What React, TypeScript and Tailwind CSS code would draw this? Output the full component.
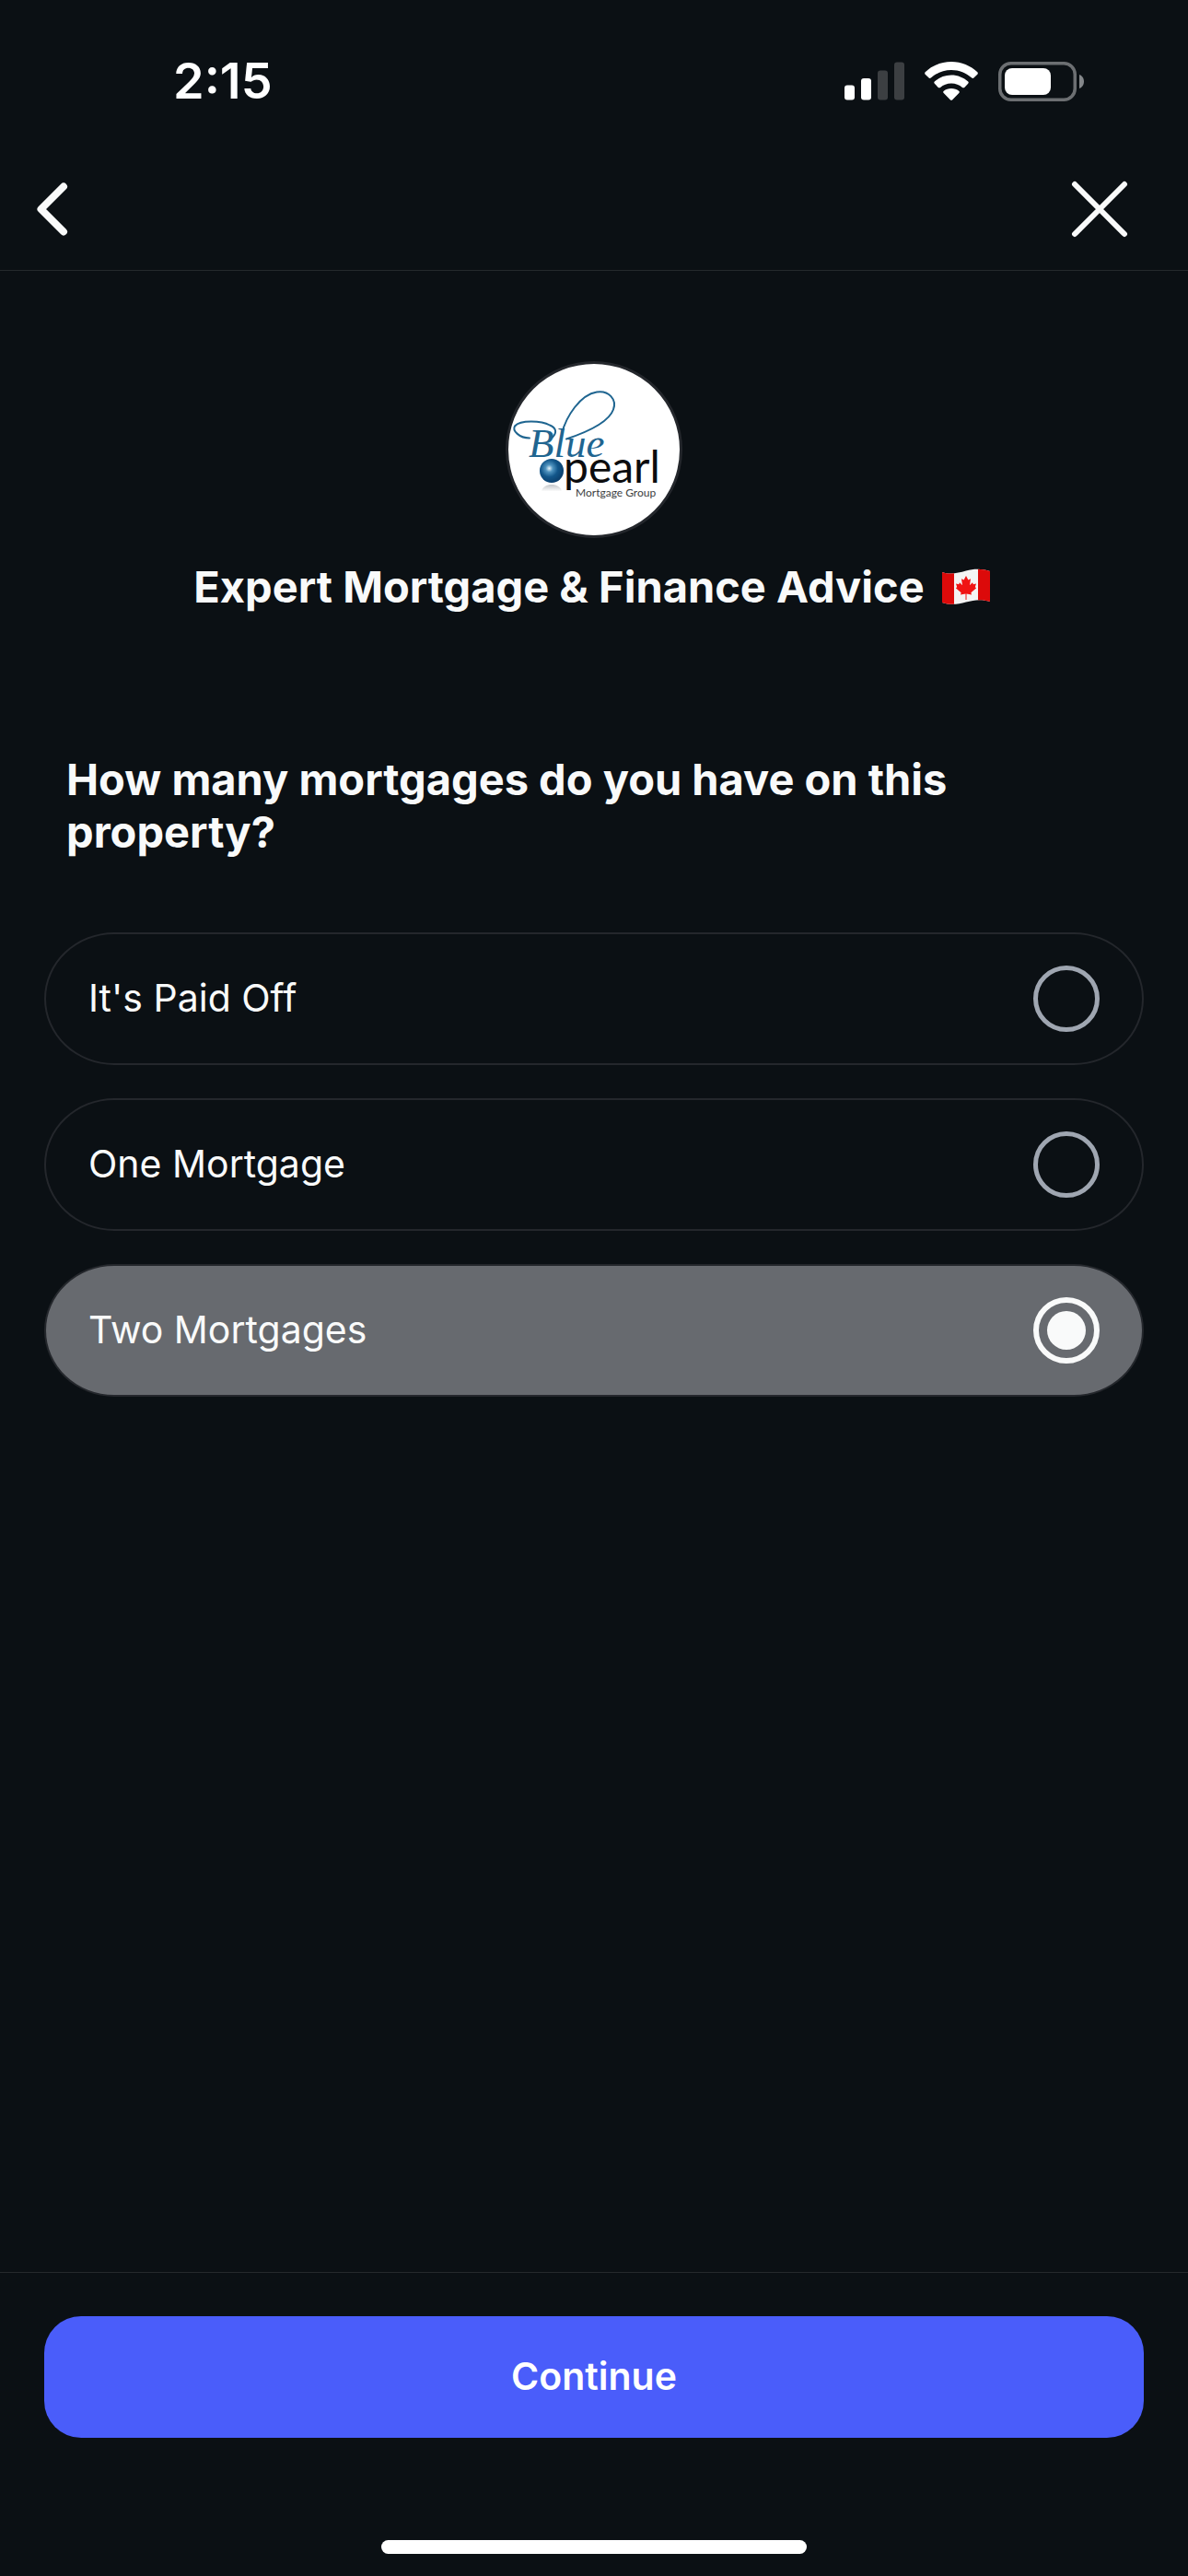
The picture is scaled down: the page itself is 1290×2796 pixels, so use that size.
import { useState } from "react";

const OPTIONS = ["It's Paid Off", "One Mortgage", "Two Mortgages"];

function SignalIcon() {
  return (
    <svg width="65" height="42" viewBox="0 0 65 42" aria-hidden="true">
      <rect x="0" y="25.500" width="11" height="16" rx="3" fill="#fff" />
      <rect x="18" y="18" width="11" height="23.500" rx="3" fill="#fff" />
      <rect x="36" y="9.500" width="11" height="32" rx="3" fill="#3c3f42" />
      <rect x="54" y="0.500" width="11" height="41" rx="3" fill="#3c3f42" />
    </svg>
  );
}

function WifiIcon() {
  return (
    <svg width="58" height="42" viewBox="0 0 58 42" fill="#fff" aria-hidden="true">
      <path d="M29 0C40 0 50 4.300 57.300 11.300C58 12 58 13 57.300 13.700L53.400 17.600C52.800 18.200 51.900 18.200 51.200 17.600C45.200 12.200 37.500 9 29 9S12.800 12.200 6.800 17.600C6.100 18.200 5.200 18.200 4.600 17.600L0.700 13.700C0 13 0 12 0.700 11.300C8 4.300 18 0 29 0Z" />
      <path d="M29 14.500C36 14.500 42.300 17.200 47.200 21.500C47.900 22.100 47.900 23.100 47.200 23.800L43.200 27.900C42.600 28.500 41.700 28.500 41 28C37.700 25.100 33.600 23.500 29 23.500S20.300 25.100 17 28C16.300 28.500 15.400 28.500 14.800 27.900L10.800 23.800C10.100 23.100 10.100 22.100 10.800 21.500C15.700 17.200 22 14.500 29 14.500Z" />
      <path d="M29 29C32.200 29 35 30 37.200 31.800C38 32.400 38 33.400 37.300 34L30 41.400C29.400 42 28.600 42 28 41.400L20.700 34C20 33.400 20 32.400 20.800 31.800C23 30 25.800 29 29 29Z" />
    </svg>
  );
}

function BatteryIcon() {
  return (
    <svg width="94" height="43" viewBox="0 0 94 43" aria-hidden="true">
      <rect x="1.750" y="1.750" width="81.500" height="39.500" rx="12" fill="none" stroke="#6c6f72" strokeWidth="3.500" />
      <rect x="7" y="7" width="50" height="29" rx="8" fill="#fff" />
      <path d="M88 14C91 15 93 18 93 21.500S91 28 88 29Z" fill="#84878a" />
    </svg>
  );
}

function BrandLogo() {
  return (
    <svg width="186" height="186" viewBox="12 9.500 186 186" role="img" aria-label="Blue Pearl Mortgage Group">
      <defs>
        <radialGradient id="pearl" cx="0.4" cy="0.4" r="0.6">
          <stop offset="0" stopColor="#e6f4fb" />
          <stop offset="0.25" stopColor="#4f93bf" />
          <stop offset="0.6" stopColor="#12568a" />
          <stop offset="1" stopColor="#0c416f" />
        </radialGradient>
        <linearGradient id="pearl-shadow" x1="0" y1="0" x2="0" y2="1">
          <stop offset="0" stopColor="#c4c7ca" />
          <stop offset="1" stopColor="#ffffff" />
        </linearGradient>
      </defs>
      <g fill="none" stroke="#1f6590" strokeLinecap="round">
        <path strokeWidth="2" d="M35 90C24 90 16 82 19 77C25 70 48 71 57 76C64 79 65 84 60 89" />
        <path strokeWidth="2" d="M70 85C75 66 90 43 108 40C121 38 130 48 126 59C121 73 99 83 75 91" />
      </g>
      <text x="34" y="110" fontFamily="'Liberation Serif', serif" fontSize="45" fontStyle="italic" fill="#1f6590">Blue</text>
      <circle cx="59" cy="125.500" r="13" fill="url(#pearl)" />
      <path d="M48 148C49 138 69 138 70 148Z" fill="url(#pearl-shadow)" />
      <text x="72" y="138" fontFamily="Lato, sans-serif" fontSize="48" fill="#0c0c0e">pearl</text>
      <text x="85" y="153" fontFamily="Lato, sans-serif" fontSize="12" fill="#3b3d40">Mortgage Group</text>
    </svg>
  );
}

function CanadaFlag() {
  return (
    <svg width="54" height="40" viewBox="0 0 54 40" role="img" aria-label="Flag of Canada" className="shrink-0">
      <defs>
        <clipPath id="wave">
          <path d="M1 4C10 7 18 5 27 2.500C36 0 44 0 53 3V36C44 33 36 34 27 36.500C18 39 10 40 1 37Z" />
        </clipPath>
      </defs>
      <g clipPath="url(#wave)">
        <rect width="54" height="40" fill="#f4f4f4" />
        <rect width="14" height="40" fill="#dc0a0a" />
        <rect x="40" width="14" height="40" fill="#dc0a0a" />
        <path
          d="M27 8L29.400 12.500L32 11.300L31 18.200L34 15.200L34.800 17.200L38 16.600L36.800 20.200L38.200 21.300L32.400 26.300L33 28.400L27.500 27.500V34H26.500V27.500L21 28.400L21.600 26.300L15.800 21.300L17.200 20.200L16 16.600L19.200 17.200L20 15.200L23 18.200L22 11.300L24.600 12.500Z"
          fill="#f01414"
        />
      </g>
    </svg>
  );
}

export default function App() {
  const [selected, setSelected] = useState("Two Mortgages");

  return (
    <div className="flex min-h-screen flex-col bg-[#0b1014] font-['Inter',sans-serif] text-[#f9fafa]">
      <div className="flex h-40 items-center justify-between pt-4 pr-28 pl-[188px]">
        <span className="text-[54px] leading-none font-semibold text-white">2:15</span>
        <div className="flex items-center gap-[22px]">
          <SignalIcon />
          <WifiIcon />
          <BatteryIcon />
        </div>
      </div>

      <header className="flex h-[134px] items-center justify-between border-b border-[#25292c] px-8">
        <button type="button" aria-label="Back" className="p-1">
          <svg width="42" height="66" viewBox="0 0 42 66" fill="none" stroke="#f9fafa" strokeWidth="8" strokeLinecap="round" strokeLinejoin="round" aria-hidden="true">
            <path d="M33 8.500L8.500 33L33 57.500" />
          </svg>
        </button>
        <button type="button" aria-label="Close" className="pr-8">
          <svg width="64" height="64" viewBox="0 0 64 64" fill="none" stroke="#f9fafa" strokeWidth="6" strokeLinecap="round" aria-hidden="true">
            <path d="M5 5L59 59M59 5L5 59" />
          </svg>
        </button>
      </header>

      <main className="flex-1 px-12 pt-[98px]">
        <div className="flex flex-col items-center">
          <div className="size-48 overflow-hidden rounded-full border-3 border-[#24272c] bg-white">
            <BrandLogo />
          </div>
          <h1 className="mt-6 flex items-center gap-[18px] pr-1 text-[47px] leading-[57px] font-bold">
            Expert Mortgage &amp; Finance Advice
            <CanadaFlag />
          </h1>
        </div>

        <fieldset className="mt-[152px]">
          <legend className="px-6 text-[47px] leading-[57px] font-bold">
            How many mortgages do you have on this property?
          </legend>
          <div className="mt-[81px] flex flex-col gap-9">
            {OPTIONS.map((option) => (
              <label
                key={option}
                className="flex h-36 cursor-pointer items-center justify-between rounded-[76px/72px] border-2 border-[#24272c] px-[46px] text-[41px] has-checked:bg-[#676a6f]"
              >
                {option}
                <input
                  type="radio"
                  name="mortgages"
                  value={option}
                  checked={selected === option}
                  onChange={() => setSelected(option)}
                  className="size-[72px] appearance-none rounded-full border-5 border-[#9fa6b1] checked:border-6 checked:border-[#f9fafa] checked:bg-[#f9fafa] checked:bg-clip-content checked:p-[9px]"
                />
              </label>
            ))}
          </div>
        </fieldset>
      </main>

      <footer className="border-t border-[#25292c] px-12 pt-[47px] pb-6">
        <button type="button" className="h-[132px] w-full rounded-[40px] bg-[#4a5dfa] text-[41px] font-semibold text-white">
          Continue
        </button>
        <div className="mx-auto mt-[111px] h-[15px] w-[462px] rounded-full bg-white" />
      </footer>
    </div>
  );
}
